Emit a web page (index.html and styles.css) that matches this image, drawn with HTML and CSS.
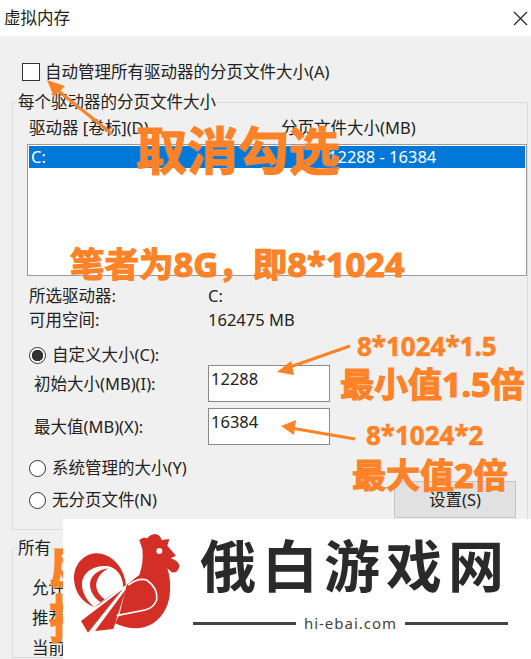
FILE: index.html
```html
<!DOCTYPE html>
<html lang="zh-CN">
<head>
    <meta charset="UTF-8">
    <meta name="viewport" content="width=device-width, initial-scale=1.0">
    <title>虚拟内存</title>
    <link rel="stylesheet" href="styles.css">
</head>
<body>

    <div class="titlebar">
        <span>虚拟内存</span>
        <svg class="close" width="15" height="15" viewBox="0 0 15 15"><path d="M1 1L14 14M14 1L1 14" stroke="#222" stroke-width="1.2" fill="none"/></svg>
    </div>

    <div class="dialog">
        <label class="auto-row"><input type="checkbox" class="check"> 自动管理所有驱动器的分页文件大小(A)</label>

        <fieldset class="group">
            <legend>每个驱动器的分页文件大小</legend>
            <div class="columns"><span>驱动器 [卷标](D)</span><span>分页文件大小(MB)</span></div>
            <div class="listbox">
                <div class="list-row"><span>C:</span><span>12288 - 16384</span></div>
            </div>
            <div class="info-row first"><span>所选驱动器:</span><span>C:</span></div>
            <div class="info-row"><span>可用空间:</span><span>162475 MB</span></div>

            <label class="radio-row custom"><input type="radio" name="size" class="radio" checked> 自定义大小(C):</label>
            <div class="size-row"><span>初始大小(MB)(I):</span><input class="size-input" type="text" value="12288"></div>
            <div class="size-row second"><span>最大值(MB)(X):</span><input class="size-input" type="text" value="16384"></div>

            <div class="bottom-row">
                <div class="radios">
                    <label class="radio-row"><input type="radio" name="size" class="radio"> 系统管理的大小(Y)</label>
                    <label class="radio-row"><input type="radio" name="size" class="radio"> 无分页文件(N)</label>
                </div>
                <button class="set-btn">设置(S)</button>
            </div>
        </fieldset>

        <!-- rest of this group is hidden by the logo card -->
        <fieldset class="group total">
            <legend>所有</legend>
            <div class="total-row">允许</div>
            <div class="total-row">推荐</div>
            <div class="total-row">当前</div>
        </fieldset>
    </div>

    <!-- annotations drawn on top of the screenshot -->
    <svg class="arrows" width="531" height="659" viewBox="0 0 531 659">
        <g fill="none" stroke="#fd8228" stroke-width="3">
            <path d="M112 134L56 89"/>
            <path d="M350 346L287 368"/>
            <path d="M355 439L291 428"/>
        </g>
        <g fill="#fd8228">
            <path d="M47 80L65 86L54 97Z"/>
            <path d="M277 372L291 361L294 375Z"/>
            <path d="M281 426L296 420L294 435Z"/>
        </g>
    </svg>
    <div class="note big n-cancel">取消勾选</div>
    <div class="note mid n-ram">笔者为8G，即8*1024</div>
    <div class="note small n-min">8*1024*1.5</div>
    <div class="note large n-min2">最小值1.5倍</div>
    <div class="note small n-max">8*1024*2</div>
    <div class="note large n-max2">最大值2倍</div>
    <div class="note big n-side1">虚</div>
    <div class="note big n-side2">拟</div>

    <div class="logo-card">
        <svg class="rooster" width="130" height="134" viewBox="0 0 390 402">
            <path fill="#d32f27" d="M198 180C192 118 145 82 105 85C62 90 40 128 42 165C45 205 70 235 102 246C120 240 160 205 198 180Z"/>
            <path fill="#fff" d="M146 124C105 118 70 140 66 172C64 200 80 228 102 246C112 240 150 212 190 188C188 150 170 130 146 124Z"/>
            <path fill="#d32f27" d="M146 130C112 134 88 155 90 182C92 205 108 222 122 232L134 223C116 208 104 190 110 170C116 150 130 138 146 130Z"/>
            <path fill="#d32f27" d="M63 288L188 193L84 323Z"/>
            <path fill="#d32f27" d="M105 318L198 192L160 312Z"/>
            <path fill="#d32f27" d="M238 45Q250 34 262 40Q270 28 285 27Q300 28 305 45L328 42L322 62L348 92L332 100Q358 108 358 125Q352 146 335 142L322 130Q332 160 330 195Q328 260 280 295Q230 325 165 295L178 270L200 180Q225 160 238 150Q252 110 247 72Z"/>
            <path fill="none" stroke="#fff" stroke-width="5" d="M205 180Q235 158 260 165Q295 190 290 225Q280 250 255 255L170 272"/>
            <circle cx="298" cy="78" r="9" fill="#fff"/>
        </svg>
        <div class="brand">
            <div class="brand-name">俄白游戏网</div>
            <div class="brand-url"><i></i><span>hi-ebai.com</span><i></i></div>
        </div>
    </div>

</body>
</html>
```

FILE: styles.css
```css
* {
    box-sizing: border-box;
}
html, body {
    height: 100%;
}
body {
    margin: 0;
    position: relative;
    overflow: hidden;
    background: #f0f0f0;
    color: #222;
    font-family: "Noto Sans", "Noto Sans CJK SC", sans-serif;
    font-size: 16.5px;
    line-height: 20px;
}
.titlebar {
    height: 36px;
    padding: 0 3px 0 4px;
    background: #fff;
    display: flex;
    align-items: center;
    justify-content: space-between;
    font-size: 16.5px;
}
.dialog {
    padding: 26px 0 0 12px;
}
.auto-row {
    display: flex;
    align-items: center;
    gap: 5px;
    height: 20px;
    padding-left: 10px;
}
.check, .radio {
    appearance: none;
    margin: 0;
    flex: none;
    background: #fff;
    border: 1.5px solid #333;
}
.check {
    width: 18px;
    height: 18px;
}
.radio {
    width: 17px;
    height: 17px;
    border-radius: 50%;
}
.radio:checked {
    background: radial-gradient(circle, #333 5.5px, #fff 6px);
}
.group {
    width: 516px;
    margin: 10px 0 0 0;
    padding: 0 0 11px 14px;
    min-width: 0;
    border: 1px solid #dcdcdc;
}
.group legend {
    padding: 0;
    margin-left: -9px;
    height: 20px;
}
.columns {
    display: grid;
    grid-template-columns: 252px 1fr;
    height: 20px;
    margin-top: 6px;
    padding-left: 2px;
}
.listbox {
    height: 132px;
    margin-top: 6px;
    padding: 1px;
    background: #fff;
    border: 1px solid #9a9a9a;
}
.list-row {
    display: grid;
    grid-template-columns: 297px 1fr;
    height: 22px;
    padding-left: 2px;
    background: #0078d7;
    color: #fff;
    line-height: 22px;
}
.info-row {
    display: grid;
    grid-template-columns: 179px 1fr;
    height: 20px;
    margin-top: 4px;
    padding-left: 2px;
}
.info-row.first {
    margin-top: 10px;
}
.radio-row {
    display: flex;
    align-items: center;
    gap: 6px;
    height: 20px;
    padding-left: 2px;
}
.radio-row.custom {
    margin-top: 15px;
}
.size-row {
    display: grid;
    grid-template-columns: 174px 122px;
    align-items: center;
    padding-left: 7px;
}
.size-row.second {
    margin-top: 6px;
}
.size-input {
    width: 122px;
    height: 37px;
    padding: 0 0 10px 2px;
    border: 1px solid #8a8a8a;
    background: #fff;
    color: #222;
    font: inherit;
}
.bottom-row {
    display: flex;
    justify-content: space-between;
    height: 60px;
    margin-top: 13px;
    padding-right: 11px;
}
.radios {
    display: flex;
    flex-direction: column;
    gap: 12px;
}
.set-btn {
    align-self: flex-end;
    width: 122px;
    height: 37px;
    padding: 0;
    background: #e1e1e1;
    border: 1px solid #c4c4c4;
    color: #222;
    font: inherit;
}
.group.total {
    margin-top: 8px;
    height: 120px;
    padding: 0 0 0 19px;
}
.group.total legend {
    margin-left: -14px;
}
.total-row {
    height: 20px;
    margin-top: 10px;
}
.total-row:first-of-type {
    margin-top: 20px;
}
.arrows {
    position: absolute;
    left: 0;
    top: 0;
}
.note {
    position: absolute;
    color: #fd8228;
    font-weight: 700;
    white-space: nowrap;
    -webkit-text-stroke: 1.2px #fd8228;
    text-shadow: 0 0 2px rgba(255, 255, 255, 0.7);
}
.big {
    font-size: 51px;
    line-height: 56px;
}
.mid {
    font-size: 34.5px;
    line-height: 40px;
}
.small {
    font-size: 26px;
    line-height: 32px;
    -webkit-text-stroke-width: 0.6px;
}
.large {
    font-size: 34px;
    line-height: 44px;
}
.n-cancel { left: 136px; top: 122px; }
.n-ram { left: 70px; top: 244px; }
.n-min { left: 357px; top: 330px; }
.n-min2 { left: 340px; top: 362px; }
.n-max { left: 366px; top: 419px; }
.n-max2 { left: 352px; top: 453px; }
.n-side1 { left: 49px; top: 535px; }
.n-side2 { left: 49px; top: 590px; }
.logo-card {
    position: absolute;
    left: 63px;
    top: 519px;
    width: 468px;
    height: 140px;
    background: #fff;
    display: flex;
    align-items: flex-start;
}
.rooster {
    margin-top: 6px;
    margin-left: -3px;
    flex: none;
}
.brand {
    width: 315px;
    margin-left: 3px;
}
.brand-name {
    margin-top: 15px;
    padding-left: 7px;
    height: 62px;
    color: #2a2a2a;
    font-size: 56px;
    font-weight: 700;
    line-height: 62px;
    letter-spacing: 6px;
    white-space: nowrap;
}
.brand-url {
    display: flex;
    align-items: center;
    gap: 8px;
    margin-top: 17px;
    color: #444;
    font-size: 15px;
    line-height: 20px;
    letter-spacing: 1px;
}
.brand-url i {
    flex: 1;
    height: 3px;
    background: #444;
}
```
